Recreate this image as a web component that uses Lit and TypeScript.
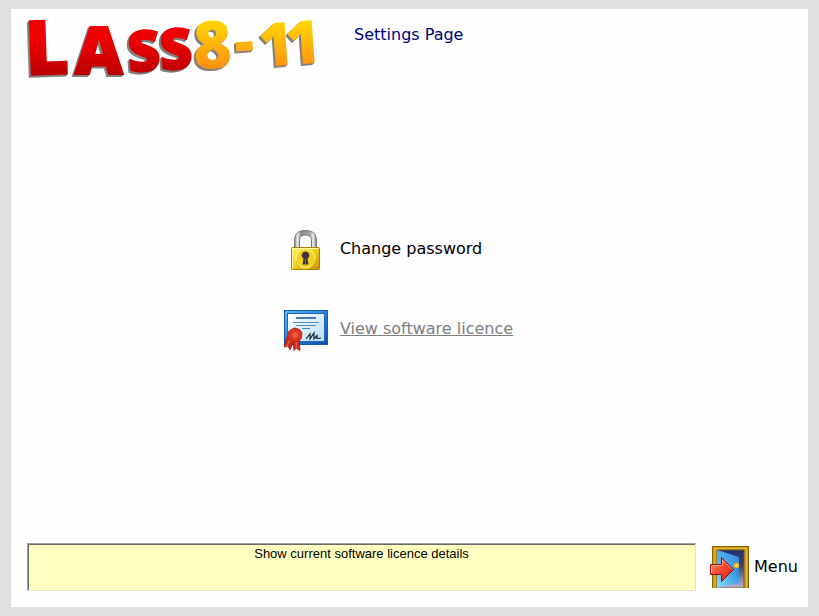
import { LitElement, html, css } from "lit";
import { customElement, state } from "lit/decorators.js";

@customElement("lass-logo")
class LassLogo extends LitElement {
  static styles = css`
    :host { display: block; }
    .logo { display: block; width: 308px; height: 70px; overflow: visible; }
    .word {
      font-family: "Open Sans", "Noto Sans", sans-serif;
      font-weight: 800;
      filter: drop-shadow(-1px 1px 0 #808080) drop-shadow(-1px 1px 0 #808080);
      stroke-linejoin: miter;
    }
    .big { font-size: 75px; }
    .cap { font-size: 66px; }
    .small { font-size: 56px; }
    .one { font-size: 60px; }
    .red { fill: url(#red); stroke: url(#red); stroke-width: 2px; }
    .gold { fill: url(#gold); }
  `;

  render() {
    return html`
      <svg class="logo" viewBox="0 0 308 70" role="img" aria-label="LASS 8-11">
        <defs>
          <linearGradient id="red" gradientUnits="userSpaceOnUse" x1="0" y1="12" x2="0" y2="60">
            <stop offset="0.2" stop-color="#f00000" />
            <stop offset="1" stop-color="#b80000" />
          </linearGradient>
          <linearGradient id="gold" gradientUnits="userSpaceOnUse" x1="0" y1="5" x2="0" y2="54">
            <stop offset="0" stop-color="#ffd400" />
            <stop offset="1" stop-color="#ff8c14" />
          </linearGradient>
        </defs>
        <text class="word">
          <tspan class="big red" x="3" y="58" rotate="-2">L</tspan><tspan
            class="cap red" x="52" y="57" rotate="0">A</tspan><tspan
            class="small red" x="106" y="55" rotate="-4">S</tspan><tspan
            class="small red" x="138" y="53" rotate="-4">S</tspan><tspan
            class="cap gold" x="171" y="52" rotate="-2">8</tspan><tspan
            class="one gold" x="213" y="46" rotate="-4">-</tspan><tspan
            class="one gold" x="237" y="50" rotate="-4">1</tspan><tspan
            class="one gold" x="264" y="48" rotate="-4">1</tspan>
        </text>
      </svg>
    `;
  }
}

@customElement("app-root")
class AppRoot extends LitElement {
  static styles = css`
    :host {
      display: block;
      box-sizing: border-box;
      min-height: 100vh;
      padding: 9px 11px;
      background: #e0e0e0;
      color: #000;
      font: 16px/20px "DejaVu Sans", Verdana, sans-serif;
    }
    .panel {
      display: flex;
      flex-direction: column;
      box-sizing: border-box;
      min-height: calc(100vh - 18px);
      padding: 8px 10px 16px 12px;
      background: #fefefe;
    }
    .header { display: flex; align-items: flex-start; gap: 23px; }
    .title {
      margin: 8px 0 0;
      font-size: 16px;
      font-weight: 400;
      color: #000080;
    }
    .main { flex: 1; display: flex; justify-content: center; padding: 122px 24px 23px 0; }
    .options { margin: 0; padding: 0; list-style: none; }
    .option { display: flex; align-items: center; height: 80px; }
    .action {
      display: flex;
      align-items: center;
      gap: 12px;
      padding: 0;
      border: 0;
      background: none;
      color: inherit;
      font: inherit;
      text-decoration: none;
      white-space: nowrap;
      cursor: pointer;
    }
    .active { color: #808080; }
    .active .label { text-decoration: underline; }
    .icon { display: block; flex: none; width: 44px; height: 44px; }
    .footer { display: flex; align-items: center; gap: 14px; padding-left: 4px; }
    .hint {
      flex: 1;
      box-sizing: border-box;
      min-height: 48px;
      border: 1px solid #a0a0a0;
      border-right-color: #e0e0e0;
      border-bottom-color: #e0e0e0;
      box-shadow: inset 1px 1px 0 #696969;
      padding-top: 1px;
      background: #ffffc0;
      font: 13px/18px "Liberation Sans", Arial, sans-serif;
      text-align: center;
    }
    .menu { gap: 5px; }
    .door { display: block; flex: none; width: 39px; height: 42px; }
  `;

  @state() private hint = "Show current software licence details";

  private padlock() {
    return html`
      <svg class="icon" viewBox="0 0 44 44" aria-hidden="true">
        <defs>
          <linearGradient id="steel" x1="0" x2="1" y1="0" y2="0">
            <stop offset="0" stop-color="#777" />
            <stop offset="0.13" stop-color="#eee" />
            <stop offset="0.3" stop-color="#888" />
            <stop offset="0.72" stop-color="#aaa" />
            <stop offset="0.85" stop-color="#eee" />
            <stop offset="1" stop-color="#777" />
          </linearGradient>
          <linearGradient id="brass" x1="0" x2="1" y1="0" y2="1">
            <stop offset="0" stop-color="#fff06a" />
            <stop offset="0.4" stop-color="#f8d820" />
            <stop offset="1" stop-color="#c89000" />
          </linearGradient>
        </defs>
        <path d="M10.500 21V14C10.500 6 15 3.500 21.500 3.500S32.500 6 32.500 14V21H27.500V14C27.500 10 25.500 8 21.500 8S15.500 10 15.500 14V21Z"
          fill="url(#steel)" stroke="#777" />
        <rect x="7.500" y="20.500" width="28" height="22" rx="1" fill="url(#brass)" stroke="#a88008" />
        <path d="M8.500 41V21.500H34.500" fill="none" stroke="#fff8a8" />
        <circle cx="21.500" cy="31.500" r="9.500" fill="#f4d01c" stroke="#fff17a" stroke-width="1.200" />
        <path d="M12.500 34A9 9 0 0 0 30.500 33" fill="none" stroke="#cf9e08" stroke-opacity="0.700" />
        <path d="M21.500 24.500A3.800 3.800 0 0 1 23.500 31.500L24.500 37.500H18.500L19.500 31.500A3.800 3.800 0 0 1 21.500 24.500Z" fill="#403044" />
        <path d="M21.500 32V37" stroke="#8a6480" />
      </svg>
    `;
  }

  private certificate() {
    return html`
      <svg class="icon" viewBox="0 0 44 44" aria-hidden="true">
        <defs>
          <linearGradient id="frame" x1="0" x2="1" y1="0" y2="1">
            <stop offset="0" stop-color="#62b8f4" />
            <stop offset="0.5" stop-color="#2a84dc" />
            <stop offset="1" stop-color="#0b4da2" />
          </linearGradient>
          <linearGradient id="paper" x1="0" x2="1" y1="0" y2="1">
            <stop offset="0" stop-color="#fff" />
            <stop offset="1" stop-color="#b8dcf6" />
          </linearGradient>
        </defs>
        <rect x="0.500" y="3.500" width="43" height="34" fill="url(#frame)" stroke="#105cb0" />
        <rect x="3.500" y="6.500" width="37" height="28" fill="url(#paper)" stroke="#1c66b4" />
        <path d="M12 11H32" stroke="#3a7cba" stroke-width="2" />
        <path d="M9 15.500H35M12 18.500H32M18 21.500H26" stroke="#4a8ac4" />
        <path d="M22 32L26 27L26 32L30 26L30 32L33 28.500L33 31.500L37 31" fill="none" stroke="#123" stroke-width="1.200" />
        <path d="M3 30L0 40L4 39L6 43L9 36L10 43.500L12 41L16 43.500L15 30Z" fill="#cc2c1c" stroke="#98180c" stroke-width="0.800" />
        <path d="M6 33L3 39M12 33L12.500 41" stroke="#e65a44" stroke-width="1.500" />
        <path d="M11 21L14 22L16 23L18 26L17.500 29L17 32L14 34L11 35L8 34L5 32L4 29L4.500 25L7 22.500Z" fill="#df3522" stroke="#b42214" />
        <circle cx="11" cy="28" r="3.500" fill="#ec5642" stroke="#bd2919" stroke-opacity="0.600" />
      </svg>
    `;
  }

  private door() {
    return html`
      <svg class="door" viewBox="0 0 39 42" aria-hidden="true">
        <defs>
          <linearGradient id="night" x1="0" x2="0" y1="0" y2="1">
            <stop offset="0" stop-color="#20307c" />
            <stop offset="0.4" stop-color="#403c68" />
            <stop offset="1" stop-color="#b8b4d8" />
          </linearGradient>
          <linearGradient id="leaf" x1="0" x2="1" y1="1" y2="0">
            <stop offset="0" stop-color="#8cdcff" />
            <stop offset="0.5" stop-color="#48a8ec" />
            <stop offset="1" stop-color="#1c64bc" />
          </linearGradient>
          <linearGradient id="arrow" x1="0" x2="1" y1="0" y2="1">
            <stop offset="0" stop-color="#ff9474" />
            <stop offset="0.5" stop-color="#f44830" />
            <stop offset="1" stop-color="#c81c0c" />
          </linearGradient>
        </defs>
        <path d="M2 0H39V42H2Z" fill="#8a6200" />
        <path d="M3 1H38V42H3Z" fill="#c89c14" />
        <path d="M5 42V2.500H36.500V42" fill="none" stroke="#e2bc40" />
        <path d="M7 4H34V42H7Z" fill="url(#night)" stroke="#75540c" />
        <path d="M7 4L29 11V37L7 42Z" fill="url(#leaf)" />
        <path d="M7 4L29 11V18L7 28Z" fill="#5cb4f0" opacity="0.400" />
        <circle cx="26.500" cy="19.500" r="2.500" fill="#ffd43c" stroke="#d89c08" stroke-width="0.700" />
        <path d="M0.500 18.500H11.500V11.500L23.500 23.500L11.500 35.500V28.500H0.500Z" fill="url(#arrow)" stroke="#921008" />
        <path d="M1.500 27V19.500H12.500V14L22 23.500" fill="none" stroke="#ffb098" stroke-opacity="0.700" />
      </svg>
    `;
  }

  render() {
    return html`
      <div class="panel">
        <header class="header">
          <lass-logo></lass-logo>
          <h1 class="title">Settings Page</h1>
        </header>
        <main class="main">
          <ul class="options">
            <li class="option">
              <a class="action" href="#password">${this.padlock()}<span class="label">Change password</span></a>
            </li>
            <li class="option">
              <a class="action active" href="#licence">${this.certificate()}<span class="label">View software licence</span></a>
            </li>
          </ul>
        </main>
        <footer class="footer">
          <div class="hint" role="status">${this.hint}</div>
          <button class="action menu" type="button">${this.door()}<span class="label">Menu</span></button>
        </footer>
      </div>
    `;
  }
}
